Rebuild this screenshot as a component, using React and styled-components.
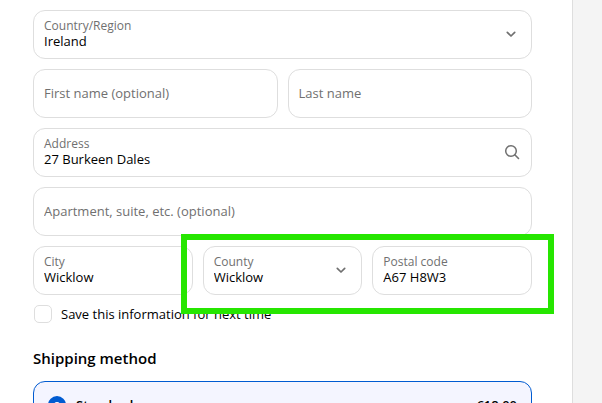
import React from "react";
import styled, { createGlobalStyle } from "styled-components";

const GlobalStyle = createGlobalStyle`
  * {
    box-sizing: border-box;
  }
  body {
    margin: 0;
    color: #000;
    background: #fff;
    font-family: "Segoe UI", "Open Sans", "Noto Sans", sans-serif;
    font-size: 13px;
  }
  input, select {
    font: inherit;
    color: inherit;
    margin: 0;
  }
`;

const Page = styled.div`
  display: grid;
  grid-template-columns: 1fr 30px;
  height: 100vh;
  overflow: hidden;
`;

const Main = styled.main`
  padding: 10px 40px 0 33px;
`;

const Summary = styled.aside`
  background: #f4f4f4;
  border-left: 1px solid #dedede;
`;

const Form = styled.form`
  display: flex;
  flex-direction: column;
  gap: 10px;
`;

const Row = styled.div`
  position: relative;
  display: grid;
  grid-template-columns: repeat(${props => props.$columns || 1}, minmax(0, 1fr));
  gap: 10px;
`;

const Field = styled.div`
  display: flex;
  align-items: center;
  height: 49px;
  padding: 0 10px 2px;
  border: 1px solid #dedede;
  border-radius: 12px;
  background: #fff;

  > svg {
    flex: none;
    color: #707070;
  }
`;

const FieldBody = styled.div`
  display: flex;
  flex-direction: column;
  flex: 1;
  min-width: 0;
`;

const Label = styled.label`
  font-size: 12px;
  line-height: 15px;
  color: #707070;
`;

const Input = styled.input`
  width: 100%;
  height: 16px;
  padding: 0;
  border: 0;
  outline: 0;
  line-height: 16px;
  background: transparent;

  &::placeholder {
    color: #707070;
    opacity: 1;
  }
`;

const EmptyInput = styled(Input)`
  height: 20px;
  line-height: 20px;
`;

const Select = styled.select`
  width: 100%;
  height: 16px;
  padding: 0;
  border: 0;
  outline: 0;
  line-height: 16px;
  background: transparent;
  appearance: none;
`;

const Highlight = styled.div`
  position: absolute;
  z-index: 1;
  grid-column: 2 / 4;
  inset: -12px -22px -19px;
  border: 6px solid #26e600;
  pointer-events: none;
`;

const CheckRow = styled.div`
  display: flex;
  align-items: center;
  gap: 9px;
  height: 18px;
  padding-left: 1px;
`;

const Checkbox = styled.input`
  width: 18px;
  height: 18px;
  border: 1px solid #dedede;
  border-radius: 5px;
  background: #fff;
  appearance: none;
`;

const Title = styled.h2`
  margin: 23px 0 11px;
  font-size: 15px;
  font-weight: 600;
  line-height: 24px;
`;

const Method = styled.label`
  display: flex;
  align-items: center;
  gap: 10px;
  padding: 14px;
  border: 1px solid #005bd1;
  border-radius: 12px;
  background: #f4f5ff;
  font-weight: 600;
  line-height: 18px;
`;

const Radio = styled.input`
  width: 18px;
  height: 18px;
  border: 6px solid #005bd1;
  border-radius: 50%;
  background: #fff;
  appearance: none;
`;

const Price = styled.span`
  margin-left: auto;
`;

const Chevron = () => (
  <svg width="20" height="20" viewBox="0 0 20 20" fill="none" aria-hidden="true">
    <path
      d="M6.3 8.3L10 12l3.7-3.7"
      stroke="currentColor"
      strokeWidth="1.7"
      strokeLinecap="round"
      strokeLinejoin="round"
    />
  </svg>
);

const Magnifier = () => (
  <svg width="20" height="20" viewBox="0 0 20 20" fill="none" aria-hidden="true">
    <circle cx="10" cy="9" r="5.3" stroke="currentColor" strokeWidth="1.5" />
    <path d="M13.8 12.8l3.7 3.7" stroke="currentColor" strokeWidth="1.6" strokeLinecap="round" />
  </svg>
);

const TextField = ({ id, label, value, icon }) => (
  <Field>
    {value ? (
      <FieldBody>
        <Label htmlFor={id}>{label}</Label>
        <Input id={id} defaultValue={value} />
      </FieldBody>
    ) : (
      <EmptyInput id={id} aria-label={label} placeholder={label} />
    )}
    {icon}
  </Field>
);

const SelectField = ({ id, label, value }) => (
  <Field>
    <FieldBody>
      <Label htmlFor={id}>{label}</Label>
      <Select id={id} defaultValue={value}>
        <option>{value}</option>
      </Select>
    </FieldBody>
    <Chevron />
  </Field>
);

const App = () => (
  <Page>
    <GlobalStyle />
    <Main>
      <Form>
        <Row>
          <SelectField id="country" label="Country/Region" value="Ireland" />
        </Row>
        <Row $columns={2}>
          <TextField id="first-name" label="First name (optional)" />
          <TextField id="last-name" label="Last name" />
        </Row>
        <Row>
          <TextField
            id="address"
            label="Address"
            value="27 Burkeen Dales"
            icon={<Magnifier />}
          />
        </Row>
        <Row>
          <TextField id="apartment" label="Apartment, suite, etc. (optional)" />
        </Row>
        <Row $columns={3}>
          <TextField id="city" label="City" value="Wicklow" />
          <SelectField id="county" label="County" value="Wicklow" />
          <TextField id="postal-code" label="Postal code" value="A67 H8W3" />
          <Highlight />
        </Row>
        <CheckRow>
          <Checkbox type="checkbox" id="save-info" />
          <label htmlFor="save-info">Save this information for next time</label>
        </CheckRow>
      </Form>
      <Title>Shipping method</Title>
      <Method>
        <Radio type="radio" name="shipping" defaultChecked />
        <span>Standard</span>
        <Price>€18.00</Price>
      </Method>
    </Main>
    <Summary />
  </Page>
);

export default App;
